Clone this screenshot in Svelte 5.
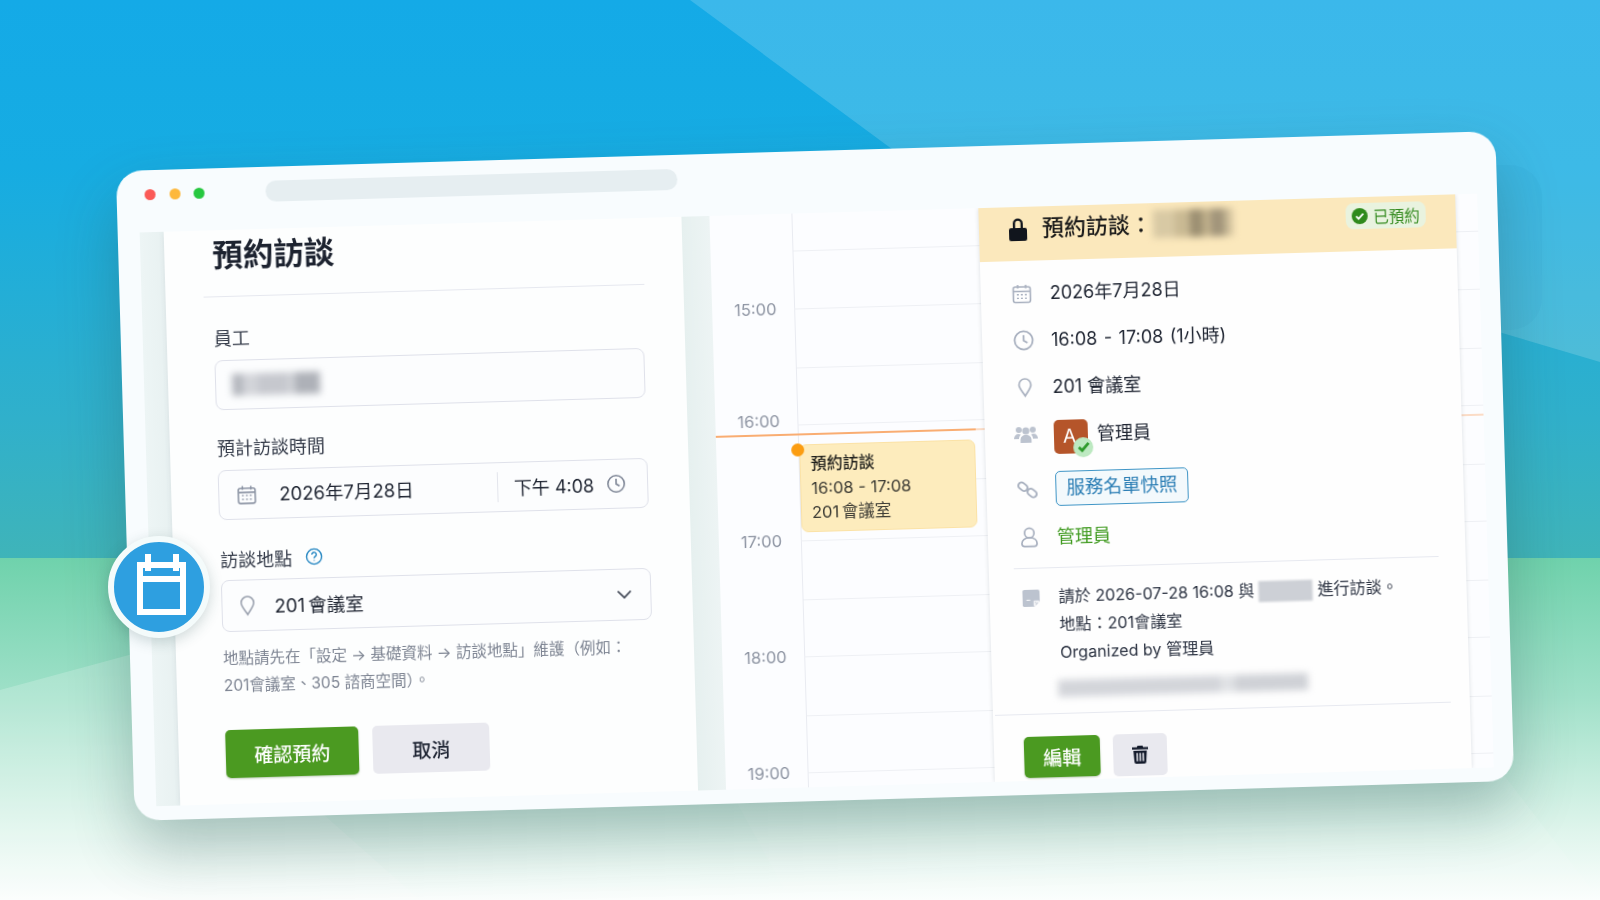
<script>
  const hours = ["15:00", "16:00", "17:00", "18:00", "19:00"];
</script>

<div class="stage">
  <div class="sky"></div>
  <div class="meadow"></div>
  <svg class="shapes" viewBox="0 0 1600 900" aria-hidden="true">
    <polygon points="690,0 900,155 1600,362 1600,0" fill="#fff" fill-opacity="0.17" />
    <rect x="1400" y="165" width="142" height="165" rx="32" fill="#0a5f8a" fill-opacity="0.035" />
    <polygon points="0,690 140,652 420,900 0,900" fill="#fff" fill-opacity="0.2" />
    <polygon points="730,790 1500,770 1600,900 790,900" fill="#fff" fill-opacity="0.1" />
  </svg>

  <div class="window">
    <div class="titlebar">
      <span class="dot red"></span>
      <span class="dot amber"></span>
      <span class="dot green"></span>
      <span class="address"></span>
    </div>

    <div class="content">
      <div class="strip-a"></div>

      <section class="form">
        <h1>預約訪談</h1>

        <label class="lbl lbl-first">員工</label>
        <div class="input h50"><span class="smudge"></span></div>

        <label class="lbl lbl-time">預計訪談時間</label>
        <div class="input h50 datetime">
          <svg class="ico" viewBox="0 0 20 20" width="21" height="21" fill="none" stroke="#8d95a5" stroke-width="1.5">
            <rect x="2" y="3.5" width="16" height="14.5" rx="2" />
            <path d="M6 1.5v3.5M14 1.5v3.5M2 7.5h16" />
            <path d="M5.5 10.5h1.5M9.3 10.5h1.5M13 10.5h1.5M5.5 14h1.5M9.3 14h1.5M13 14h1.5" stroke-width="1.3" />
          </svg>
          <span class="date">2026年7月28日</span>
          <span class="sep"></span>
          <span class="clocktime">下午 4:08</span>
          <svg viewBox="0 0 20 20" width="20" height="20" fill="none" stroke="#7f8797" stroke-width="1.6">
            <circle cx="10" cy="10" r="8.2" />
            <path d="M10 5v5.3l3.4 2" />
          </svg>
        </div>

        <label class="lbl lbl-place">訪談地點
          <svg viewBox="0 0 20 20" width="18" height="18" fill="none" stroke="#1f83c0" stroke-width="1.5">
            <circle cx="10" cy="10" r="8.4" />
            <path d="M7.5 7.8a2.5 2.5 0 1 1 3.8 2.1c-.9.6-1.3 1-1.3 2" />
            <path d="M10 14v.8" />
          </svg>
        </label>
        <div class="input h52 place">
          <svg class="ico" viewBox="0 0 20 24" width="18" height="22" fill="none" stroke="#9aa1ae" stroke-width="1.7">
            <path d="M10 22c-3-5-7-9-7-13a7 7 0 0 1 14 0c0 4-4 8-7 13z" />
          </svg>
          <span class="date">201 會議室</span>
          <svg class="chev" viewBox="0 0 16 10" width="16" height="10" fill="none" stroke="#3b4250" stroke-width="1.7">
            <path d="M1.5 1.5L8 8l6.5-6.5" />
          </svg>
        </div>

        <p class="hint">地點請先在「設定 → 基礎資料 → 訪談地點」維護（例如：<br />201會議室、305 諮商空間）。</p>

        <div class="actions">
          <button class="btn primary wide">確認預約</button>
          <button class="btn muted cancel">取消</button>
        </div>
      </section>

      <div class="strip-b"></div>

      <section class="calendar">
        <div class="hour first"><span class="time"></span><span class="slot"></span></div>
        {#each hours as h, i}
          <div class="hour"><span class="time" class:nudged={i === 1}>{h}</span><span class="slot"></span></div>
        {/each}

        <div class="nowline"></div>

        <div class="event">
          <span class="pin"></span>
          <strong>預約訪談</strong>
          <span>16:08 - 17:08</span>
          <span class="tight">201 會議室</span>
        </div>

        <aside class="detail">
          <header>
            <div class="head-title">
              <svg class="lock" viewBox="0 0 18 24" width="18" height="24" fill="#11151d">
                <path d="M4 11V6.500a5 5 0 0 1 10 0V11h2a2 2 0 0 1 2 2v9a2 2 0 0 1-2 2H2a2 2 0 0 1-2-2v-9a2 2 0 0 1 2-2h2zm2.300 0h5.400V6.500a2.700 2.700 0 0 0-5.400 0V11z" />
              </svg>
              <span class="head-text">預約訪談：</span>
              <span class="smudge warm"></span>
            </div>
            <div class="badge">
              <svg viewBox="0 0 20 20" width="16" height="16">
                <circle cx="10" cy="10" r="10" fill="#2f8a1c" />
                <path d="M5.5 10.3l3 3 6-6.2" fill="none" stroke="#fff" stroke-width="2.2" />
              </svg>
              已預約
            </div>
          </header>

          <div class="rows">
            <div class="row">
              <span class="rowicon">
                <svg viewBox="0 0 20 20" width="20" height="20" fill="none" stroke="#a8b0bf" stroke-width="1.6">
                  <rect x="1.5" y="3" width="17" height="15.5" rx="2" />
                  <path d="M6 1v3.5M14 1v3.5M1.5 7.5h17" />
                  <path d="M5 10.8h2M9 10.8h2M13 10.8h2M5 14.4h2M9 14.4h2M13 14.4h2" stroke-width="1.4" />
                </svg>
              </span>
              2026年7月28日
            </div>
            <div class="row spread">
              <span class="rowicon">
                <svg viewBox="0 0 20 20" width="21" height="21" fill="none" stroke="#a8b0bf" stroke-width="1.7">
                  <circle cx="10" cy="10" r="8.6" />
                  <path d="M10 5v5.3l3.6 2" />
                </svg>
              </span>
              16:08 - 17:08 (1小時)
            </div>
            <div class="row">
              <span class="rowicon">
                <svg viewBox="0 0 20 24" width="17" height="21" fill="none" stroke="#a8b0bf" stroke-width="2">
                  <path d="M10 22c-3-5-7-9-7-13a7 7 0 0 1 14 0c0 4-4 8-7 13z" />
                </svg>
              </span>
              201 會議室
            </div>
            <div class="row attendee">
              <span class="rowicon">
                <svg viewBox="0 0 24 20" width="24" height="20" fill="#bcc3cf">
                  <circle cx="5" cy="5" r="3" />
                  <circle cx="19" cy="5" r="3" />
                  <circle cx="12" cy="6" r="3.6" />
                  <path d="M0 14c0-3 1.8-5 4.5-5 1 0 1.8.2 2.4.7C5.500 11 5 12.500 5 14H0zM24 14c0-3-1.800-5-4.500-5-1 0-1.800.2-2.400.7 1.400 1.300 1.900 2.800 1.900 4.300H24z" />
                  <path d="M6.500 18v-3c0-3 2.300-5 5.500-5s5.500 2 5.500 5v3z" />
                </svg>
              </span>
              <span class="avatar"><span class="initial">A</span><span class="tick">
                <svg viewBox="0 0 16 16" width="13" height="13" fill="none" stroke="#2c9a2a" stroke-width="3.400"><path d="M2 8.500l4 4 8-9" /></svg>
              </span></span>
              管理員
            </div>
            <div class="row linkrow">
              <span class="rowicon">
                <svg viewBox="0 0 22 22" width="22" height="22" fill="none" stroke="#a8b0bf" stroke-width="1.9">
                  <rect x="1.500" y="4.500" width="10" height="6.500" rx="3.250" transform="rotate(40 6.500 7.750)" />
                  <rect x="10.500" y="11" width="10" height="6.500" rx="3.250" transform="rotate(40 15.500 14.250)" />
                </svg>
              </span>
              <span class="snapshot">服務名單快照</span>
            </div>
            <div class="row owner">
              <span class="rowicon">
                <svg viewBox="0 0 20 22" width="19" height="21" fill="none" stroke="#a8b0bf" stroke-width="1.8">
                  <circle cx="10" cy="6.500" r="5" />
                  <path d="M10 11.500c-5 0-8 2.500-8 6 0 2 1 3 3 3h10c2 0 3-1 3-3 0-3.500-3-6-8-6z" />
                </svg>
              </span>
              管理員
            </div>
          </div>

          <div class="rule upper"></div>

          <div class="note">
            <span class="rowicon noteicon">
              <svg viewBox="0 0 20 20" width="19" height="19">
                <path d="M3 1h14a2 2 0 0 1 2 2v10.500L13.500 19H3a2 2 0 0 1-2-2V3a2 2 0 0 1 2-2z" fill="#bcc3cf" />
                <path d="M13 13h5v1.500h-3.500V18H13zM5 12h4" fill="none" stroke="#fff" stroke-width="1" />
              </svg>
            </span>
            <div class="notetext">
              <p>請於 2026-07-28 16:08 與 <span class="smudge inline"></span> 進行訪談。</p>
              <p>地點：201會議室</p>
              <p>Organized by 管理員</p>
              <span class="smudge longline"></span>
            </div>
          </div>

          <div class="rule lower"></div>

          <div class="foot">
            <button class="btn primary edit">編輯</button>
            <button class="btn muted trash" aria-label="刪除">
              <svg viewBox="0 0 16 18" width="16" height="18" fill="#131a2b">
                <path d="M5.500 0h5l.7 1.600H16v2.200H0V1.600h4.800zM1.300 5h13.400l-.8 11.300A1.800 1.800 0 0 1 12.100 18H3.900a1.800 1.800 0 0 1-1.800-1.700zm3 2.200v8.300h1.500V7.200zm3 0v8.300h1.500V7.200zm3 0v8.300h1.500V7.200z" />
              </svg>
            </button>
          </div>
        </aside>
      </section>
    </div>
  </div>

  <div class="badge-circle">
    <svg viewBox="0 0 49 61" width="49" height="61" shape-rendering="crispEdges" fill="#fff">
      <path fill-rule="evenodd" d="M0 8h8V0h6v8h22V0h6v8h7v53H0zM6 14v41h37V14h-1v3h-6v-3H14v3H8v-3z" />
      <rect x="6" y="22" width="37" height="6" />
    </svg>
  </div>
</div>

<style>
  :global(body) {
    margin: 0;
    font-family: "Inter", "Noto Sans CJK TC", sans-serif;
  }

  .stage {
    position: relative;
    width: 1600px;
    height: 900px;
    overflow: hidden;
    background: #fff;
  }
  .sky {
    height: 558px;
    background: linear-gradient(180deg, #14aae7 0%, #16ace2 30%, #30b0cb 75%, #3fb4b9 100%);
  }
  .meadow {
    height: 342px;
    background: linear-gradient(180deg, #6fd2ac 0%, #9fe0c8 40%, #dff5ec 80%, #fbfefd 100%);
  }
  .shapes {
    position: absolute;
    inset: 0;
    width: 1600px;
    height: 900px;
  }

  /* tilted browser window, a free piece on the canvas */
  .window {
    position: absolute;
    left: 125px;
    top: 151px;
    width: 1380px;
    height: 650px;
    box-sizing: border-box;
    padding: 0 20px 14px 22px;
    border-radius: 26px;
    background: #f8fcfe;
    box-shadow: 0 28px 60px rgba(40, 80, 80, 0.32);
    transform: rotate(-1.66deg);
    filter: blur(0.4px);
    color: #1d2330;
  }

  .titlebar {
    display: flex;
    align-items: center;
    height: 48px;
    margin-bottom: 14px;
    gap: 13.5px;
    padding-left: 6px;
  }
  .dot {
    width: 11px;
    height: 11px;
    border-radius: 50%;
  }
  .red { background: #fb5a57; }
  .amber { background: #fdb83c; }
  .green { background: #27c840; }
  .address {
    width: 412px;
    height: 21px;
    margin-left: 47px;
    border-radius: 11px;
    background: #e6eef1;
  }

  .content {
    display: flex;
    height: 574px;
    overflow: hidden;
  }
  .strip-a {
    width: 24px;
    background: linear-gradient(90deg, #edf5f5, #e8f1f1);
  }
  .strip-b {
    width: 28px;
    background: linear-gradient(90deg, #e6f0ef, #edf4f4);
  }

  /* form column */
  .form {
    box-sizing: border-box;
    width: 518px;
    padding: 0 39px 0 47px;
    background: #fdfefe;
    box-shadow: 0 0 6px rgba(60, 70, 90, 0.09);
  }
  h1 {
    margin: 0 0 0 -9px;
    padding: 2px 0 19px 10px;
    font-size: 30.5px;
    line-height: 45px;
    font-weight: 700;
    border-bottom: 1px solid #e6e8ef;
  }
  .lbl {
    display: flex;
    align-items: center;
    gap: 13px;
    height: 26px;
    font-size: 18px;
    color: #333a48;
  }
  .lbl-first { margin: 27px 0 10px; }
  .lbl-time { margin: 24px 0 10px; }
  .lbl-place { margin: 26px 0 8px; }

  .input {
    display: flex;
    align-items: center;
    box-sizing: border-box;
    width: 430px;
    padding: 0 16px;
    border: 1px solid #dfe1ea;
    border-radius: 8px;
    background: #fcfdfe;
    font-size: 18.5px;
    color: #1d2330;
  }
  .h50 { height: 50px; }
  .h52 { height: 52px; }

  .smudge {
    display: block;
    width: 88px;
    height: 22px;
    background: linear-gradient(90deg, #b4b7be 0 12%, #d2d4d9 12% 30%, #c6c8ce 30% 62%, #cfd1d6 62% 72%, #aeb1b8 72% 100%);
    filter: blur(3.5px);
  }
  .smudge.warm {
    width: 80px;
    height: 28px;
    margin-left: -5px;
    background: linear-gradient(90deg, #d8c9a4 0 28%, #c9b993 28% 46%, #9c8f72 46% 62%, #c2b28d 62% 72%, #a1947a 72% 90%, #cfbf9b 90% 100%);
  }
  .smudge.inline {
    display: inline-block;
    width: 54px;
    height: 21px;
    vertical-align: middle;
    background: #cdd0d6;
    filter: blur(1px);
  }
  .smudge.longline {
    width: 250px;
    height: 17px;
    margin: 14px 0 0 -3px;
    background: linear-gradient(90deg, #d3d5da 0 65%, #e0e2e5 65% 71%, #cfd1d6 71% 100%);
    filter: blur(3.5px);
  }

  .ico { flex: none; }
  .datetime { padding-right: 21px; }
  .datetime .ico { margin-left: 1px; }
  .datetime .date {
    margin: 0 0 3px 22px;
    flex: none;
  }
  .place .date {
    margin-left: 18px;
    word-spacing: -2px;
  }
  .sep {
    width: 1px;
    height: 30px;
    margin-left: auto;
    background: #e3e5ec;
  }
  .clocktime {
    margin: 0 12px 0 16px;
    font-size: 18px;
  }
  .chev { margin-left: auto; margin-right: 2px; }

  .hint {
    margin: 13px 0 0;
    font-size: 15.5px;
    line-height: 27px;
    color: #7d8492;
    white-space: nowrap;
  }

  .actions {
    display: flex;
    gap: 14px;
    margin-top: 31px;
  }
  .btn {
    border: 0;
    padding: 0;
    border-radius: 5px;
    font: inherit;
    font-size: 19px;
    font-weight: 500;
  }
  .primary {
    background: #4b9a21;
    color: #fff;
    box-shadow: 0 1px 2px rgba(40, 90, 20, 0.3);
  }
  .muted {
    background: #e9e9ef;
    color: #1b2130;
  }
  .wide { width: 133px; height: 48px; }
  .cancel { width: 117px; height: 48px; }

  /* calendar column */
  .calendar {
    position: relative;
    flex: 1;
    min-width: 0;
    background: #fcfdff;
    overflow: hidden;
  }
  .hour {
    display: flex;
    height: 116px;
  }
  .hour.first { height: 95px; }
  .time {
    width: 82px;
    height: 0;
    padding-left: 22px;
    box-sizing: border-box;
    font-size: 16.5px;
    line-height: 0;
    color: #8e95a3;
  }
  .time.nudged { margin-top: -4px; }
  .slot {
    position: relative;
    flex: 1;
    border-left: 1px solid #e9ebf1;
    border-top: 1px solid #eef0f4;
  }
  .first .slot { border-top: 0; }
  .slot::after {
    content: "";
    position: absolute;
    left: 0;
    right: 0;
    top: 58px;
    border-top: 1px solid #eef0f4;
  }
  .first .slot::after { top: 37px; }

  .nowline {
    position: absolute;
    left: 0;
    right: 0;
    top: 220px;
    height: 1.5px;
    background: linear-gradient(90deg, #f9ad72 0 260px, #fbdcc6 260px);
  }

  .event {
    position: absolute;
    left: 83px;
    top: 231px;
    width: 176px;
    height: 88px;
    box-sizing: border-box;
    padding: 6px 10px;
    display: flex;
    flex-direction: column;
    border: 1px solid #fbe2a6;
    border-radius: 7px;
    background: #fdecbd;
    font-size: 16.5px;
    line-height: 24.5px;
    color: #3b3a33;
  }
  .event strong { font-weight: 500; color: #1d1d1a; font-size: 16px; }
  .event .tight { word-spacing: -2px; }
  .pin {
    position: absolute;
    left: -9px;
    top: -2px;
    width: 13px;
    height: 13px;
    border-radius: 50%;
    background: #fb9d12;
  }

  .detail {
    position: absolute;
    left: 269px;
    top: 0;
    bottom: 0;
    width: 477px;
    background: #fefefe;
    box-shadow: 0 0 4px rgba(60, 70, 90, 0.18);
  }
  header {
    display: flex;
    justify-content: space-between;
    align-items: flex-start;
    box-sizing: border-box;
    height: 54px;
    padding: 6px 30px 0 30px;
    background: #fbe8bc;
  }
  .head-title {
    display: flex;
    align-items: center;
    gap: 6px;
    font-size: 22px;
    font-weight: 500;
    line-height: 30px;
    color: #1a1a1a;
  }
  .lock { margin-top: 2px; }
  .head-text { margin-left: 9px; }
  .badge {
    display: flex;
    align-items: center;
    gap: 5px;
    height: 26px;
    padding: 0 6px;
    border-radius: 8px;
    background: #e9f3df;
    font-size: 15.5px;
    color: #338a1e;
  }

  .rows {
    display: flex;
    flex-direction: column;
    gap: 18px;
    padding: 18px 0 16px 29px;
  }
  .row {
    display: flex;
    align-items: center;
    gap: 16px;
    height: 29px;
    font-size: 18px;
    line-height: 29px;
    color: #1d2330;
  }
  .row.spread { word-spacing: 1.5px; }
  .rowicon {
    display: flex;
    justify-content: center;
    width: 24px;
    flex: none;
  }
  .attendee { height: 34px; margin-top: -2px; }
  .linkrow { height: 35px; margin-top: 2px; }
  .owner { margin-top: -2px; color: #3f9a1f; }
  .avatar {
    position: relative;
    display: flex;
    align-items: center;
    justify-content: center;
    width: 34px;
    height: 34px;
    margin: 5px -7px 0 0;
    border-radius: 5px;
    background: #b5552a;
    color: #fff;
    font-size: 19px;
  }
  .initial { margin-right: 3px; }
  .tick {
    position: absolute;
    right: -5px;
    bottom: -4px;
    display: flex;
    align-items: center;
    justify-content: center;
    width: 20px;
    height: 20px;
    border-radius: 50%;
    background: #bde9c1;
  }
  .snapshot {
    box-sizing: border-box;
    width: 133px;
    height: 35px;
    border: 1.5px solid #3f95c6;
    border-radius: 5px;
    background: #f3f9fc;
    color: #2a7db4;
    font-size: 18.5px;
    text-align: center;
    line-height: 31px;
  }

  .rule { border-top: 1px solid #e7e9f0; }
  .rule.upper { margin: 0 27px 0 25px; }
  .rule.lower { margin: 0 19px 0 2px; }

  .note {
    display: flex;
    gap: 16px;
    height: 145px;
    padding: 14px 0 0 29px;
    box-sizing: border-box;
  }
  .noteicon { margin-top: 6px; }
  .notetext p {
    margin: 0;
    font-size: 16.1px;
    line-height: 28px;
    color: #2c3342;
    white-space: nowrap;
  }

  .foot {
    display: flex;
    align-items: flex-start;
    gap: 13px;
    padding: 21px 0 0 30px;
  }
  .edit { width: 76px; height: 41px; margin-top: 1px; }
  .trash {
    display: flex;
    align-items: center;
    justify-content: center;
    width: 54px;
    height: 42px;
    margin-top: 1px;
  }

  /* round badge sits over window edge, not tilted */
  .badge-circle {
    position: absolute;
    left: 108px;
    top: 536px;
    display: flex;
    align-items: center;
    justify-content: center;
    box-sizing: border-box;
    width: 102px;
    height: 102px;
    border: 6px solid #f4fbfb;
    border-radius: 50%;
    background: #2e9fe0;
    box-shadow: 0 4px 14px rgba(40, 80, 80, 0.22);
  }
  .badge-circle svg {
    margin: 0 0 5px 5px;
  }
</style>
